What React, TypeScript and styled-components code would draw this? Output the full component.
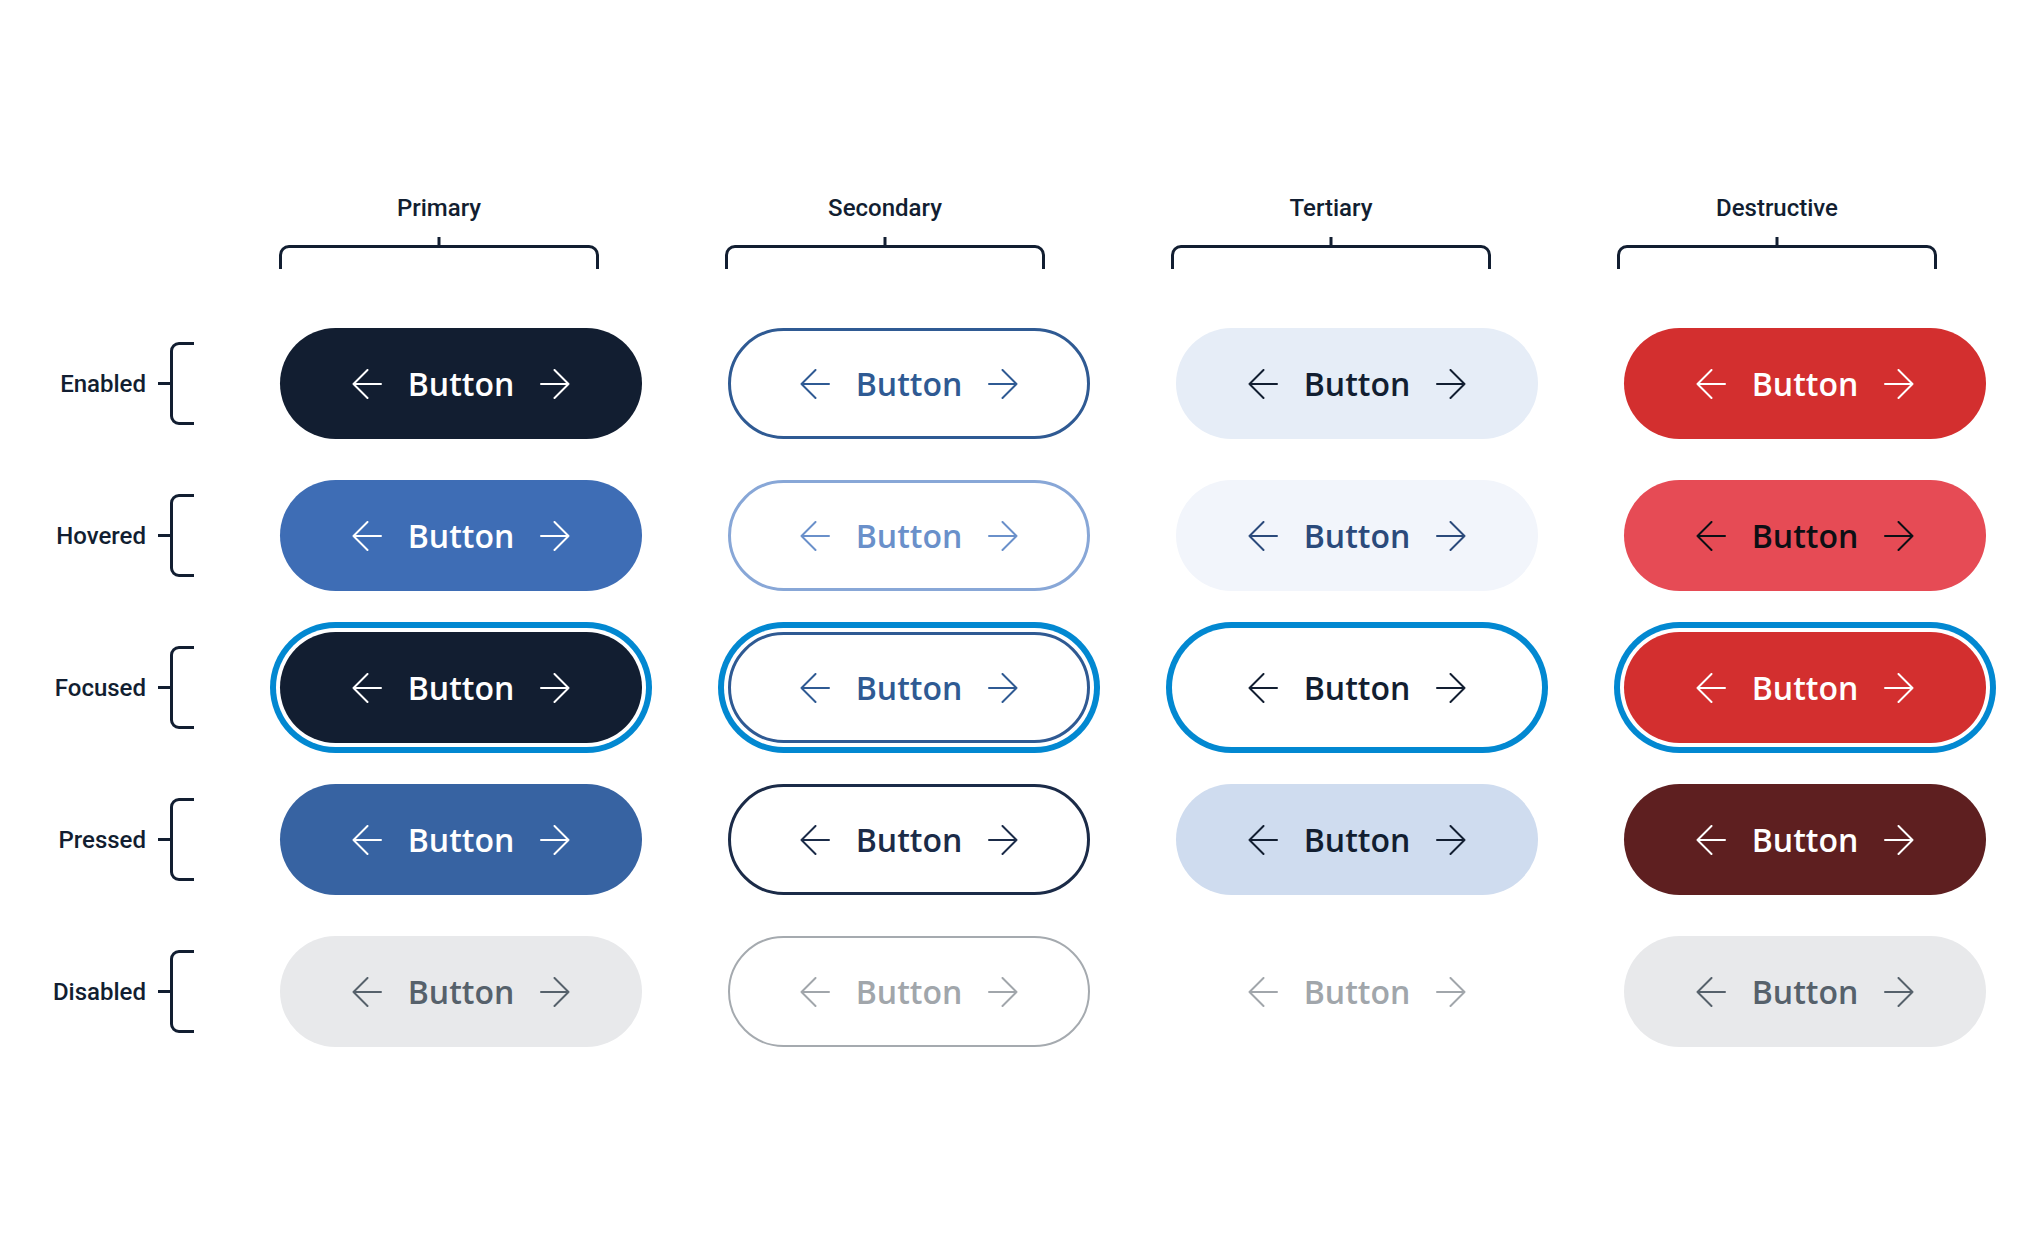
import React from "react";
import styled, { createGlobalStyle } from "styled-components";

const GlobalStyle = createGlobalStyle`
  html, body { margin: 0; padding: 0; background: #ffffff; }
  body { font-family: Roboto, "Liberation Sans", Arial, sans-serif; }
`;

type Variant = "primary" | "secondary" | "tertiary" | "destructive";
type State = "enabled" | "hovered" | "focused" | "pressed" | "disabled";

interface Look {
  bg: string;
  fg: string;
  border?: string;
  borderWidth?: number;
  ring?: boolean;
}

const LOOKS: Record<Variant, Record<State, Look>> = {
  primary: {
    enabled: { bg: "#121e31", fg: "#ffffff" },
    hovered: { bg: "#3e6db5", fg: "#ffffff" },
    focused: { bg: "#121e31", fg: "#ffffff", ring: true },
    pressed: { bg: "#3763a2", fg: "#ffffff" },
    disabled: { bg: "#e8e9eb", fg: "#56616b" },
  },
  secondary: {
    enabled: { bg: "#ffffff", fg: "#2f5a93", border: "#2f5a93", borderWidth: 3 },
    hovered: { bg: "#ffffff", fg: "#6a90ca", border: "#88a7d7", borderWidth: 3 },
    focused: { bg: "#ffffff", fg: "#2f5a93", border: "#2f5a93", borderWidth: 3, ring: true },
    pressed: { bg: "#ffffff", fg: "#1b2b48", border: "#1b2b48", borderWidth: 3 },
    disabled: { bg: "#ffffff", fg: "#a1a6ab", border: "#a5aaaf", borderWidth: 2 },
  },
  tertiary: {
    enabled: { bg: "#e6edf7", fg: "#121e31" },
    hovered: { bg: "#f2f5fb", fg: "#2b4a7b" },
    focused: { bg: "#ffffff", fg: "#121e31", ring: true },
    pressed: { bg: "#cfdcef", fg: "#121e31" },
    disabled: { bg: "transparent", fg: "#a1a6ab" },
  },
  destructive: {
    enabled: { bg: "#d32f2f", fg: "#ffffff" },
    hovered: { bg: "#e64b55", fg: "#0c0f14" },
    focused: { bg: "#d32f2f", fg: "#ffffff", ring: true },
    pressed: { bg: "#5e1f20", fg: "#ffffff" },
    disabled: { bg: "#e8e9eb", fg: "#56616b" },
  },
};

const VARIANTS: { key: Variant; label: string }[] = [
  { key: "primary", label: "Primary" },
  { key: "secondary", label: "Secondary" },
  { key: "tertiary", label: "Tertiary" },
  { key: "destructive", label: "Destructive" },
];

const STATES: { key: State; label: string }[] = [
  { key: "enabled", label: "Enabled" },
  { key: "hovered", label: "Hovered" },
  { key: "focused", label: "Focused" },
  { key: "pressed", label: "Pressed" },
  { key: "disabled", label: "Disabled" },
];

const INK = "#121e31";

const Page = styled.main`
  padding: 194px 0 0 40px;
  display: flex;
  flex-direction: column;
  gap: 59px;
`;

const HeaderRow = styled.div`
  display: grid;
  grid-template-columns: 155px repeat(4, 362px);
  column-gap: 84px;
`;

const HeaderCell = styled.div`
  width: 320px;
  display: flex;
  flex-direction: column;
  align-items: center;
  gap: 15px;
`;

const HeaderLabel = styled.div`
  font-family: Roboto, "Liberation Sans", Arial, sans-serif;
  font-size: 24px;
  line-height: 28px;
  font-weight: 500;
  color: ${INK};
`;

const Rows = styled.div`
  display: flex;
  flex-direction: column;
  gap: 41px;
`;

const ButtonRow = styled.div`
  display: grid;
  grid-template-columns: 154px repeat(4, 362px);
  column-gap: 86px;
  height: 111px;
  align-items: center;
`;

const RowLabelCell = styled.div`
  display: flex;
  align-items: center;
  justify-content: flex-end;
  gap: 12px;
  height: 100%;
`;

const RowLabel = styled.div`
  font-family: Roboto, "Liberation Sans", Arial, sans-serif;
  font-size: 24px;
  line-height: 28px;
  font-weight: 500;
  color: ${INK};
`;

const PillButton = styled.button<{
  $bg: string;
  $fg: string;
  $border?: string;
  $borderWidth?: number;
  $ring?: boolean;
}>`
  box-sizing: border-box;
  width: 362px;
  height: 111px;
  border-radius: 56px;
  margin: 0;
  padding: 0;
  display: flex;
  align-items: center;
  justify-content: center;
  gap: 26px;
  background: ${(p) => p.$bg};
  color: ${(p) => p.$fg};
  border: ${(p) => (p.$border ? `${p.$borderWidth ?? 3}px solid ${p.$border}` : "none")};
  box-shadow: ${(p) => (p.$ring ? "0 0 0 4px #ffffff, 0 0 0 10px #0288d1" : "none")};
  font-family: "Open Sans", "Noto Sans", sans-serif;
  font-size: 32px;
  font-weight: 600;
  line-height: 1;
  cursor: pointer;
  outline: none;
`;

const ButtonText = styled.span`
  display: block;
  line-height: 40px;
`;

const BracketGroup = styled.div`
  display: flex;
  align-items: center;
`;

const Tick = styled.span`
  display: block;
  width: 12px;
  height: 3px;
  background: ${INK};
`;

const ArrowIcon = ({ dir }: { dir: "left" | "right" }) => (
  <svg width="30" height="30" viewBox="0 0 30 30" fill="none" aria-hidden="true">
    {dir === "left" ? (
      <path d="M29 15H1.5M15.5 1L1.5 15l14 14" stroke="currentColor" strokeWidth="2" strokeLinecap="round" strokeLinejoin="round" />
    ) : (
      <path d="M1 15h27.5M14.5 1l14 14-14 14" stroke="currentColor" strokeWidth="2" strokeLinecap="round" strokeLinejoin="round" />
    )}
  </svg>
);

const ColumnBracket = () => (
  <svg width="320" height="32" viewBox="0 0 320 32" fill="none" aria-hidden="true">
    <path d="M1.5 32V18a8.5 8.5 0 0 1 8.5-8.5h300a8.5 8.5 0 0 1 8.5 8.5V32" stroke={INK} strokeWidth="3" />
    <path d="M160 0v9.5" stroke={INK} strokeWidth="3" />
  </svg>
);

const RowBracket = () => (
  <svg width="24" height="83" viewBox="0 0 24 83" fill="none" aria-hidden="true">
    <path d="M24 1.5H9a7.5 7.5 0 0 0-7.5 7.5v65a7.5 7.5 0 0 0 7.5 7.5h15" stroke={INK} strokeWidth="3" />
  </svg>
);

const DemoButton = ({ variant, state }: { variant: Variant; state: State }) => {
  const look = LOOKS[variant][state];
  return (
    <PillButton
      type="button"
      $bg={look.bg}
      $fg={look.fg}
      $border={look.border}
      $borderWidth={look.borderWidth}
      $ring={look.ring}
      disabled={state === "disabled"}
    >
      <ArrowIcon dir="left" />
      <ButtonText>Button</ButtonText>
      <ArrowIcon dir="right" />
    </PillButton>
  );
};

export default function App() {
  return (
    <>
      <GlobalStyle />
      <Page>
        <HeaderRow>
          <div />
          {VARIANTS.map((v) => (
            <HeaderCell key={v.key}>
              <HeaderLabel>{v.label}</HeaderLabel>
              <ColumnBracket />
            </HeaderCell>
          ))}
        </HeaderRow>
        <Rows>
          {STATES.map((s) => (
            <ButtonRow key={s.key}>
              <RowLabelCell>
                <RowLabel>{s.label}</RowLabel>
                <BracketGroup>
                  <Tick />
                  <RowBracket />
                </BracketGroup>
              </RowLabelCell>
              {VARIANTS.map((v) => (
                <DemoButton key={v.key} variant={v.key} state={s.key} />
              ))}
            </ButtonRow>
          ))}
        </Rows>
      </Page>
    </>
  );
}
